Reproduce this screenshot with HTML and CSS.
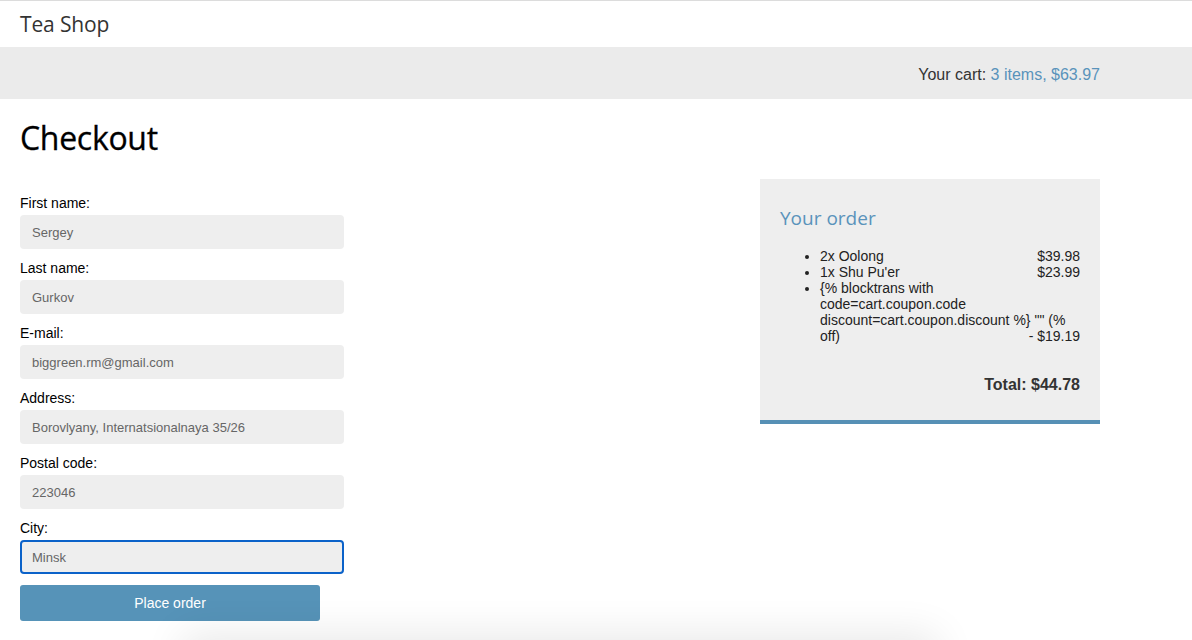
FILE: index.html
```html
<!DOCTYPE html>
<html>
<head>
<meta charset="utf-8">
<title>Tea Shop - Checkout</title>
<link rel="stylesheet" href="styles.css">
</head>
<body>
<header class="topbar">
  <div class="container"><a class="logo" href="#">Tea Shop</a></div>
</header>
<div class="subbar">
  <div class="container cart">Your cart: <a href="#">3 items, $63.97</a></div>
</div>
<main class="container">
  <h1 class="page-title">Checkout</h1>
  <div class="layout">
    <form class="order-form">
      <label class="field-label">First name:</label>
      <input class="field" type="text" value="Sergey">
      <label class="field-label">Last name:</label>
      <input class="field" type="text" value="Gurkov">
      <label class="field-label">E-mail:</label>
      <input class="field" type="text" value="biggreen.rm@gmail.com">
      <label class="field-label">Address:</label>
      <input class="field" type="text" value="Borovlyany, Internatsionalnaya 35/26">
      <label class="field-label">Postal code:</label>
      <input class="field" type="text" value="223046">
      <label class="field-label">City:</label>
      <input class="field focused" type="text" value="Minsk">
      <button class="submit" type="button">Place order</button>
    </form>
    <aside class="order-info">
      <h3 class="order-title">Your order</h3>
      <ul class="items">
        <li>2x Oolong <span class="price">$39.98</span></li>
        <li>1x Shu Pu'er <span class="price">$23.99</span></li>
        <li>{% blocktrans with code=cart.coupon.code discount=cart.coupon.discount %} "" (% off) <span class="price">- $19.19</span></li>
      </ul>
      <p class="total">Total: $44.78</p>
    </aside>
  </div>
</main>
<div class="fold-shadow"></div>
</body>
</html>
```
FILE: styles.css
```css
html, body {
  margin: 0;
  padding: 0;
  background: #fff;
}
body {
  font-family: "Liberation Sans", Arial, sans-serif;
  font-size: 14px;
  color: #222;
  border-top: 1px solid #dcdcdc;
}
.container {
  width: 1080px;
  padding: 0 20px;
}
.topbar {
  height: 46px;
}
.logo {
  display: block;
  font-family: "Open Sans", sans-serif;
  font-size: 21px;
  line-height: 46px;
  color: #333;
  text-decoration: none;
  letter-spacing: -0.15px;
}
.subbar {
  background: #ebebeb;
  height: 52px;
}
.cart {
  text-align: right;
  font-size: 16px;
  line-height: 49px;
  padding-top: 3px;
  color: #333;
}
.cart a {
  color: #5993bb;
  text-decoration: none;
}
.page-title {
  font-family: "Open Sans", sans-serif;
  font-weight: 400;
  font-size: 32px;
  letter-spacing: -0.3px;
  color: #000;
  margin: 18px 0 0;
  line-height: 42px;
  -webkit-text-stroke: 0.3px #000;
}
.layout {
  display: flex;
  justify-content: space-between;
  margin-top: 20px;
}
.order-form {
  display: flex;
  flex-direction: column;
  width: 324px;
  padding-top: 16px;
}
.field-label {
  font-size: 14px;
  line-height: 16px;
  color: #000;
  margin-bottom: 4px;
}
.field {
  box-sizing: border-box;
  width: 324px;
  height: 34px;
  border: 2px solid transparent;
  border-radius: 4px;
  background: #eeeeee;
  font-family: "Liberation Sans", Arial, sans-serif;
  font-size: 13px;
  color: #666;
  padding: 0 10px;
  margin: 0 0 11px;
  outline: none;
}
.field.focused {
  border-color: #0b62c9;
}
.submit {
  width: 300px;
  height: 36px;
  border: none;
  border-radius: 3px;
  background: #5693b8;
  color: #fff;
  font-family: "Liberation Sans", Arial, sans-serif;
  font-size: 14px;
  margin-top: 0;
  padding-top: 1px;
  cursor: pointer;
}
.order-info {
  width: 340px;
  box-sizing: border-box;
  background: #eeeeee;
  border-bottom: 4px solid #5690b5;
  padding: 20px 20px 20px;
  align-self: flex-start;
}
.order-title {
  font-family: "Open Sans", sans-serif;
  font-weight: 400;
  font-size: 19px;
  color: #5a93bb;
  margin: 6px 0 0;
  line-height: 26px;
}
.items {
  margin: 17px 0 0;
  padding-left: 40px;
  line-height: 16px;
  color: #222;
}
.price {
  float: right;
}
.total {
  text-align: right;
  font-weight: bold;
  font-size: 16px;
  color: #333;
  margin: 32px 0 6px;
  line-height: 18px;
}
.fold-shadow {
  position: fixed;
  left: 190px;
  top: 642px;
  width: 740px;
  height: 60px;
  box-shadow: 0 0 40px 8px rgba(0, 0, 0, 0.09);
  pointer-events: none;
}
```
